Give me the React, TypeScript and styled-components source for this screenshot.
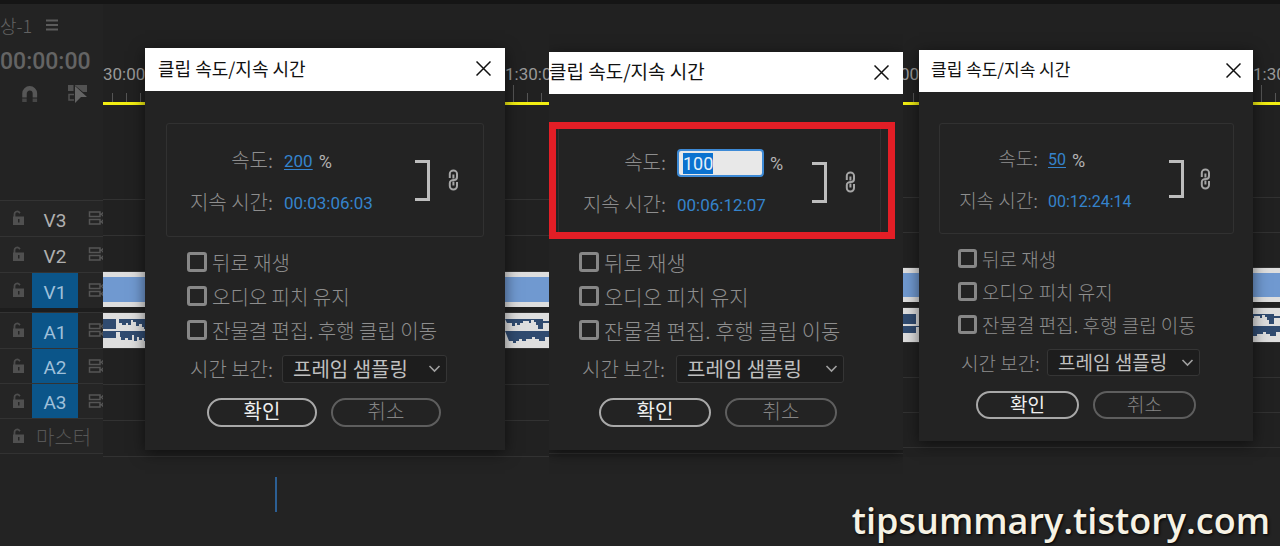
import React, { useEffect, useRef } from "react";
import styled, { createGlobalStyle, ThemeProvider } from "styled-components";

const latin = `Roboto, "Noto Sans CJK KR", sans-serif`;
const korean = `"Noto Sans CJK KR", sans-serif`;

interface Metrics {
  titleHeight: number;
  titlePad: number;
  titleSize: number;
  closePad: number;
  bodyTop: number;
  boxLeft: number;
  boxRight: number;
  boxHeight: number;
  boxPad: number;
  labelWidth: number;
  valueGap: number;
  rowHeight: number;
  bracket: number;
  bracketGap: number;
  chainPad: number;
  text: number;
  checkText: number;
  value: number;
  checksTop: number;
  checkLeft: number;
  check: number;
  checkPitch: number;
  selectWidth: number;
  selectHeight: number;
  selectLabel: number;
  buttonsLeft: number;
  buttonWidth: number;
  bottom: number;
}

const large: Metrics = {
  titleHeight: 43, titlePad: 13, titleSize: 18, closePad: 14,
  bodyTop: 32, boxLeft: 21, boxRight: 21, boxHeight: 114, boxPad: 0,
  labelWidth: 106, valueGap: 11, rowHeight: 42, bracket: 41, bracketGap: 18, chainPad: 24,
  text: 20, checkText: 20, value: 17,
  checksTop: 8, checkLeft: 42, check: 20, checkPitch: 34,
  selectWidth: 165, selectHeight: 28, selectLabel: 82, buttonsLeft: 62, buttonWidth: 110, bottom: 23,
};

const medium: Metrics = {
  ...large,
  titleHeight: 42, titlePad: 0, titleSize: 19, bodyTop: 29,
  boxLeft: 9, boxRight: 22, boxPad: 4, labelWidth: 107,
  checkText: 21, checkLeft: 30, selectWidth: 168, selectLabel: 84, buttonsLeft: 50, buttonWidth: 112,
};

const small: Metrics = {
  titleHeight: 42, titlePad: 12, titleSize: 17, closePad: 12,
  bodyTop: 31, boxLeft: 20, boxRight: 19, boxHeight: 111, boxPad: 0,
  labelWidth: 98, valueGap: 10, rowHeight: 42, bracket: 38, bracketGap: 16, chainPad: 22,
  text: 19, checkText: 19, value: 16,
  checksTop: 8, checkLeft: 39, check: 19, checkPitch: 33,
  selectWidth: 153, selectHeight: 27, selectLabel: 76, buttonsLeft: 57, buttonWidth: 103, bottom: 22,
};

const GlobalStyle = createGlobalStyle`
  * { box-sizing: border-box; }
  body { margin: 0; background: #232323; color: #8c8c8c; font-family: ${latin}; }
  button, input, select { font-family: inherit; margin: 0; }
`;

const Page = styled.main`
  position: relative;
  min-height: 100vh;
  border-top: 4px solid #151515;
  overflow: hidden;
`;

const Shots = styled.div`
  display: grid;
  grid-template-columns: 549fr 354fr 377fr;
`;

const Shot = styled.section`
  position: relative;
  display: flex;
  min-width: 0;
  overflow: hidden;
  padding-bottom: 20px;
`;

/* ---------- sequence panel ---------- */

const Sidebar = styled.aside`
  flex: none;
  width: 103px;
  overflow: hidden;
`;

const SidebarTop = styled.div`
  height: 196px;
  padding-top: 8px;
`;

const SequenceTab = styled.div`
  display: flex;
  align-items: center;
  gap: 14px;
  height: 26px;
  font: 300 18px ${korean};
  color: #626262;
`;

const Timecode = styled.div`
  height: 46px;
  line-height: 48px;
  font-size: 23px;
  font-weight: 500;
  color: #646464;
  white-space: nowrap;
`;

const Tools = styled.div`
  display: flex;
  align-items: center;
  gap: 28px;
  padding-left: 20px;
  height: 20px;
`;

const TrackHead = styled.div<{ $height: number }>`
  display: flex;
  align-items: stretch;
  height: ${(p) => p.$height}px;
  border-top: 1px solid #333;
  background: #252525;
`;

const LockSlot = styled.div`
  flex: none;
  width: 32px;
  padding: 9px 0 0 12px;
`;

const TrackName = styled.div<{ $on?: boolean }>`
  flex: none;
  width: 46px;
  display: flex;
  align-items: center;
  justify-content: center;
  padding-top: 3px;
  font-size: 19px;
  background: ${(p) => (p.$on ? "#0b5589" : "transparent")};
  color: ${(p) => (p.$on ? "#9fc0da" : "#b0b0b0")};
`;

const MasterName = styled.div`
  display: flex;
  align-items: center;
  padding-left: 4px;
  font: 300 20px ${korean};
  color: #565656;
  white-space: nowrap;
`;

const SyncSlot = styled.div`
  padding: 10px 0 0 10px;
`;

const HeadGap = styled.div`
  height: 4px;
  background: #1d1d1d;
`;

const Timeline = styled.div`
  flex: 1;
  min-width: 0;
  background: #212121;
`;

const Ruler = styled.div`
  display: flex;
  justify-content: space-between;
  height: 101px;
  border-bottom: 3px solid #f2ee12;
`;

const RulerCell = styled.div<{ $width: number }>`
  display: flex;
  flex-direction: column;
  justify-content: flex-end;
  width: ${(p) => p.$width}px;
  overflow: hidden;
  font-size: 17px;
  line-height: 20px;
  color: #999;
`;

const RulerLabel = styled.span<{ $end?: boolean }>`
  align-self: ${(p) => (p.$end ? "flex-end" : "flex-start")};
`;

const Ticks = styled.div<{ $start: number }>`
  display: flex;
  align-items: flex-end;
  gap: 13px;
  height: 18px;
  padding-left: ${(p) => p.$start}px;
`;

const Tick = styled.span<{ $tall?: boolean }>`
  flex: none;
  width: 1px;
  height: ${(p) => (p.$tall ? 17 : 9)}px;
  background: #555;
`;

const Lane = styled.div<{ $height: number }>`
  height: ${(p) => p.$height}px;
  border-top: 1px solid #323232;
`;

const Space = styled.div<{ $height: number }>`
  height: ${(p) => p.$height}px;
`;

const VideoClip = styled.div`
  height: 100%;
  background: #7099d0;
  border: solid #dedede;
  border-width: 5px 0;
`;

const AudioClip = styled.svg`
  display: block;
  width: 100%;
  height: 100%;
  background: #dedede;
`;

const PlayheadRow = styled.div`
  height: 60px;
  padding-left: 275px;
`;

const Playhead = styled.div`
  width: 2px;
  height: 35px;
  background: #2c5f94;
`;

/* ---------- dialog ---------- */

const Dialog = styled.form<{ $left: number; $right: number; $top: number }>`
  position: absolute;
  left: ${(p) => p.$left}px;
  right: ${(p) => p.$right}px;
  top: ${(p) => p.$top}px;
  background: #232323;
  box-shadow: 0 3px 14px rgba(0, 0, 0, 0.55);
  padding-bottom: ${(p) => p.theme.bottom}px;
  font: 300 ${(p) => p.theme.text}px ${korean};
  color: #8e8e8e;
  white-space: nowrap;
`;

const TitleBar = styled.header`
  display: flex;
  align-items: center;
  justify-content: space-between;
  height: ${(p) => p.theme.titleHeight}px;
  padding: 0 ${(p) => p.theme.closePad}px 2px ${(p) => p.theme.titlePad}px;
  background: #fff;
  color: #111;
`;

const Title = styled.h2`
  margin: 0;
  padding-bottom: 2px;
  font-size: ${(p) => p.theme.titleSize}px;
  font-weight: 400;
  line-height: 24px;
`;

const CloseButton = styled.button`
  display: flex;
  padding: 0;
  border: 0;
  background: none;
  color: #111;
`;

const Body = styled.div`
  padding-top: ${(p) => p.theme.bodyTop}px;
`;

const Frame = styled.div`
  position: relative;
  display: flex;
  align-items: center;
  height: ${(p) => p.theme.boxHeight}px;
  margin: 0 ${(p) => p.theme.boxRight}px 0 ${(p) => p.theme.boxLeft}px;
  border: 1px solid #313131;
  border-radius: 3px;
  padding: ${(p) => p.theme.boxPad}px ${(p) => p.theme.chainPad}px 0 0;
`;

const Highlight = styled.div`
  position: absolute;
  inset: -2px -15px -3px -10px;
  border: 7px solid #e31e26;
  pointer-events: none;
`;

const Fields = styled.div`
  flex: 1;
  padding-top: 4px;
`;

const Field = styled.div`
  display: flex;
  align-items: center;
  height: ${(p) => p.theme.rowHeight}px;
`;

const FieldLabel = styled.label`
  width: ${(p) => p.theme.labelWidth}px;
  margin-right: ${(p) => p.theme.valueGap}px;
  padding-bottom: 4px;
  text-align: right;
`;

const ValueButton = styled.button<{ $underline?: boolean }>`
  padding: 0;
  border: 0;
  background: none;
  font: 400 ${(p) => p.theme.value}px/20px ${latin};
  color: #3583cc;
  text-decoration: ${(p) => (p.$underline ? "underline" : "none")};
  text-underline-offset: 2px;
`;

const SpeedInput = styled.input`
  width: 87px;
  height: 28px;
  padding: 0 4px;
  border: 2px solid #3d8ad6;
  border-radius: 4px;
  outline: none;
  background: #e8e8e8;
  color: #111;
  font: 400 18px ${latin};
  &::selection { background: #0b72cf; color: #e6f0fa; }
`;

const Percent = styled.span`
  padding: 2px 0 0 6px;
  font: 400 18px/20px ${latin};
  color: #b4b4b4;
`;

const Bracket = styled.div`
  flex: none;
  width: 15px;
  height: ${(p) => p.theme.bracket}px;
  margin-right: ${(p) => p.theme.bracketGap}px;
  border: solid #bdbdbd;
  border-width: 3px 3px 3px 0;
`;

const Checks = styled.div`
  padding: ${(p) => p.theme.checksTop}px 0 0 ${(p) => p.theme.checkLeft}px;
`;

const CheckRow = styled.label`
  display: flex;
  align-items: center;
  gap: 5px;
  height: ${(p) => p.theme.checkPitch}px;
  font-size: ${(p) => p.theme.checkText}px;
`;

const CheckBox = styled.input`
  appearance: none;
  flex: none;
  width: ${(p) => p.theme.check}px;
  height: ${(p) => p.theme.check}px;
  border: 3px solid #878787;
  border-radius: 3px;
`;

const SelectRow = styled.div`
  display: flex;
  align-items: center;
  margin: 8px 0 0 ${(p) => p.theme.checkLeft + 3}px;
`;

const SelectLabel = styled.label`
  width: ${(p) => p.theme.selectLabel}px;
  line-height: 24px;
  margin-right: 10px;
`;

const SelectWrap = styled.div`
  position: relative;
  width: ${(p) => p.theme.selectWidth}px;
  height: ${(p) => p.theme.selectHeight}px;
  & > svg { position: absolute; right: 6px; top: 10px; pointer-events: none; }
`;

const Select = styled.select`
  appearance: none;
  display: block;
  width: 100%;
  height: 100%;
  padding: 0 0 1px 10px;
  border: 1px solid #353535;
  border-radius: 3px;
  background: #1d1d1d;
  color: #c0c0c0;
  font-size: ${(p) => p.theme.text}px;
  font-weight: 400;
  line-height: 24px;
`;

const Actions = styled.div`
  display: flex;
  gap: 14px;
  margin: 15px 0 0 ${(p) => p.theme.buttonsLeft}px;
`;

const ActionButton = styled.button<{ $primary?: boolean }>`
  width: ${(p) => p.theme.buttonWidth}px;
  height: ${(p) => p.theme.selectHeight + 1}px;
  padding: 0 0 3px;
  border: 2px solid ${(p) => (p.$primary ? "#a8a8a8" : "#5e5e5e")};
  border-radius: 15px;
  background: transparent;
  color: ${(p) => (p.$primary ? "#efefef" : "#858585")};
  font-size: ${(p) => p.theme.text}px;
  font-weight: ${(p) => (p.$primary ? 400 : 300)};
  line-height: 20px;
`;

const Watermark = styled.div`
  position: absolute;
  right: 10px;
  bottom: 2px;
  font: 600 36px/46px "Open Sans", sans-serif;
  color: #f6f2e4;
  text-shadow: 1px 1px 3px #000;
`;

/* ---------- icons ---------- */

const MenuIcon = () => (
  <svg width="12" height="12" viewBox="0 0 12 12" stroke="#5c5c5c" strokeWidth="2">
    <path d="M0 1.5h12M0 6h12M0 10.5h12" />
  </svg>
);

const MagnetIcon = () => (
  <svg width="19" height="18" viewBox="0 0 19 18" fill="none">
    <path d="M4.500 12.500V8.500a5.200 5.200 0 0 1 10.400 0v4" stroke="#575757" strokeWidth="4.500" />
    <path d="M2.200 13.500h4.500V17H2.200zM12.600 13.500h4.500V17h-4.500z" fill="#474747" />
  </svg>
);

const LinkedSelectionIcon = () => (
  <svg width="22" height="20" viewBox="0 0 22 20">
    <path d="M1 1h5.500v6H1zM8 1h12v7h-4L8 1.500z" fill="#525252" />
    <path d="M7 10.500H2v5.500h5" fill="none" stroke="#525252" strokeWidth="1.500" />
    <path d="M8 2l12 11h-6l-6 6z" fill="#646464" />
  </svg>
);

const LockIcon = () => (
  <svg width="13" height="16" viewBox="0 0 13 16" fill="none">
    <path d="M2.500 7V4.500a2.700 2.700 0 0 1 4.500-2.300l1 1" stroke="#4d4d4d" strokeWidth="1.800" />
    <path d="M1 6.500h11V15H1z" fill="#505050" />
    <path d="M6 9h1.500v3.500H6z" fill="#252525" />
  </svg>
);

const SyncIcon = () => (
  <svg width="18" height="15" viewBox="0 0 18 15" fill="none" stroke="#555" strokeWidth="1.500">
    <path d="M1.500 1h10.500v4.500H1.500zM1.500 8.500h10.500V13H1.500zM12 3.300h1.500l2-2M13.500 3.300l2 2M12 10.800h1.500l2-2M13.500 10.800l2 2" />
  </svg>
);

const CloseIcon = () => (
  <svg width="15" height="15" viewBox="0 0 15 15" stroke="currentColor" strokeWidth="1.500">
    <path d="M.5.5l14 14M14.500.5l-14 14" />
  </svg>
);

const ChainIcon = () => (
  <svg width="11" height="22" viewBox="0 0 11 22" fill="none" stroke="#a6a6a6" strokeWidth="2">
    <path d="M1.800 9V4.800a3.600 3.400 0 0 1 7.200 0V8a3 3 0 0 1-3 3C3.500 11 1.800 12 1.800 14v3a3.600 3.400 0 0 0 7.200 0V13" />
    <path d="M5.400 5.500v4M5.400 12.500v4" />
  </svg>
);

const ChevronIcon = () => (
  <svg width="13" height="8" viewBox="0 0 13 8" fill="none" stroke="#a0a0a0" strokeWidth="1.600">
    <path d="M1.500 1l5 5 5-5" />
  </svg>
);

/* Two channels; the opening runs from the left edge, the ending is anchored to the right edge. */
const Waveform = () => (
  <AudioClip aria-hidden="true">
    <g fill="#304b70">
      <path d="M0 6h44v10h-3v-2h-2v-3h-3v2h-3V9h-3v-2h-2v5h-3v-2h-2v2h-4v-2h-3V6h-3v10H0z" />
      <path d="M0 18h44v10h-3v-3h-2v2h-3v-3h-2v4h-3v-6h-2v5h-4v-2h-3v2h-4v-3h-1v-5h-4v6H0z" />
    </g>
    <svg x="100%" overflow="visible" fill="#304b70">
      <path d="M-44 6h38v4h2v-2h4v2h-4v-2h-2v8h-5v-4h-2v-3h-2v-2h-3v3h-2v-2h-6v2h-3v2h-3v-2h-2v3h-3v-3h-5z" />
      <path d="M-44 18h44v6h-4v4h-6v-2h-4v-2h-3v2h-6v2h-4v-2h-3v2h-3v2h-3v-2h-4z" />
    </svg>
  </AudioClip>
);

/* ---------- composed parts ---------- */

const TrackHeader = ({ name, on, height }: { name: string; on?: boolean; height: number }) => (
  <TrackHead $height={height}>
    <LockSlot><LockIcon /></LockSlot>
    <TrackName $on={on}>{name}</TrackName>
    <SyncSlot><SyncIcon /></SyncSlot>
  </TrackHead>
);

const Lanes = ({ pitch, offset }: { pitch: number; offset: number }) => (
  <>
    <Space $height={offset} />
    <Lane $height={pitch} />
    <Lane $height={pitch} />
    <Lane $height={pitch}><VideoClip /></Lane>
    <Space $height={5} />
    <Lane $height={pitch}><Waveform /></Lane>
    <Lane $height={pitch} />
    <Lane $height={pitch} />
    <Lane $height={pitch} />
    <Lane $height={1} />
  </>
);

interface SpeedDialogProps {
  id: string;
  metrics: Metrics;
  left: number;
  right: number;
  top: number;
  speed: string;
  duration: string;
  editing?: boolean;
}

const SpeedDialog = ({ id, metrics, left, right, top, speed, duration, editing }: SpeedDialogProps) => {
  const input = useRef<HTMLInputElement>(null);
  useEffect(() => {
    input.current?.focus();
    input.current?.select();
  }, []);

  return (
    <ThemeProvider theme={metrics}>
      <Dialog $left={left} $right={right} $top={top} onSubmit={(e) => e.preventDefault()}>
        <TitleBar>
          <Title>클립 속도/지속 시간</Title>
          <CloseButton type="button" aria-label="닫기"><CloseIcon /></CloseButton>
        </TitleBar>
        <Body>
          <Frame>
            <Fields>
              <Field>
                <FieldLabel htmlFor={`${id}-speed`}>속도:</FieldLabel>
                {editing ? (
                  <SpeedInput ref={input} id={`${id}-speed`} defaultValue={speed} />
                ) : (
                  <ValueButton id={`${id}-speed`} type="button" $underline>{speed}</ValueButton>
                )}
                <Percent>%</Percent>
              </Field>
              <Field>
                <FieldLabel htmlFor={`${id}-duration`}>지속 시간:</FieldLabel>
                <ValueButton id={`${id}-duration`} type="button">{duration}</ValueButton>
              </Field>
            </Fields>
            <Bracket />
            <ChainIcon />
            {editing && <Highlight />}
          </Frame>
          <Checks>
            {["뒤로 재생", "오디오 피치 유지", "잔물결 편집. 후행 클립 이동"].map((label) => (
              <CheckRow key={label}>
                <CheckBox type="checkbox" />
                {label}
              </CheckRow>
            ))}
          </Checks>
          <SelectRow>
            <SelectLabel htmlFor={`${id}-interpolation`}>시간 보간:</SelectLabel>
            <SelectWrap>
              <Select id={`${id}-interpolation`}>
                <option>프레임 샘플링</option>
              </Select>
              <ChevronIcon />
            </SelectWrap>
          </SelectRow>
          <Actions>
            <ActionButton type="submit" $primary>확인</ActionButton>
            <ActionButton type="button">취소</ActionButton>
          </Actions>
        </Body>
      </Dialog>
    </ThemeProvider>
  );
};

export default function App() {
  return (
    <Page>
      <GlobalStyle />
      <Shots>
        <Shot>
          <Sidebar>
            <SidebarTop>
              <SequenceTab>상-1 <MenuIcon /></SequenceTab>
              <Timecode>00:00:00</Timecode>
              <Tools>
                <MagnetIcon />
                <LinkedSelectionIcon />
              </Tools>
            </SidebarTop>
            <TrackHeader name="V3" height={36} />
            <TrackHeader name="V2" height={36} />
            <TrackHeader name="V1" height={36} on />
            <HeadGap />
            <TrackHeader name="A1" height={36} on />
            <TrackHeader name="A2" height={35} on />
            <TrackHeader name="A3" height={35} on />
            <TrackHead $height={35}>
              <LockSlot><LockIcon /></LockSlot>
              <MasterName>마스터</MasterName>
            </TrackHead>
            <Lane $height={1} />
          </Sidebar>
          <Timeline>
            <Ruler>
              <RulerCell $width={42}>
                <RulerLabel>30:00</RulerLabel>
                <Ticks $start={9}><Tick /><Tick /><Tick /></Ticks>
              </RulerCell>
              <RulerCell $width={44}>
                <RulerLabel>1:30:0</RulerLabel>
                <Ticks $start={8}><Tick $tall /><Tick /><Tick /></Ticks>
              </RulerCell>
            </Ruler>
            <Lanes pitch={36} offset={94} />
          </Timeline>
          <SpeedDialog id="fast" metrics={large} left={145} right={44} top={44} speed="200" duration="00:03:06:03" />
        </Shot>
        <Shot>
          <Timeline>
            <Space $height={449} />
            <Lane $height={1} />
          </Timeline>
          <SpeedDialog id="normal" metrics={medium} left={0} right={0} top={48} speed="100" duration="00:06:12:07" editing />
        </Shot>
        <Shot>
          <Timeline>
            <Ruler>
              <RulerCell $width={16}>
                <RulerLabel $end>00</RulerLabel>
                <Ticks $start={10}><Tick /></Ticks>
              </RulerCell>
              <RulerCell $width={27}>
                <RulerLabel>1:30</RulerLabel>
                <Ticks $start={8}><Tick $tall /><Tick /></Ticks>
              </RulerCell>
            </Ruler>
            <Lanes pitch={35} offset={92} />
          </Timeline>
          <SpeedDialog id="slow" metrics={small} left={16} right={27} top={46} speed="50" duration="00:12:24:14" />
        </Shot>
      </Shots>
      <PlayheadRow><Playhead /></PlayheadRow>
      <Watermark>tipsummary.tistory.com</Watermark>
    </Page>
  );
}
